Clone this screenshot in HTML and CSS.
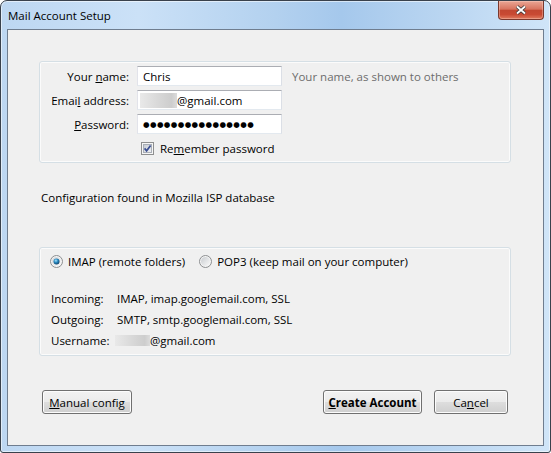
FILE: index.html
```html
<!DOCTYPE html>
<html lang="en">
<head>
<meta charset="utf-8">
<title>Mail Account Setup</title>
<link rel="stylesheet" href="styles.css">
</head>
<body>
<div class="window">
  <div class="titlebar">
    <span class="title">Mail Account Setup</span>
    <button class="close" aria-label="Close">
      <svg width="12" height="10" viewBox="0 0 12 10">
        <path d="M2 1.5 L10 8.5 M10 1.5 L2 8.5" stroke="#3a3a3a" stroke-width="3.6" fill="none"/>
        <path d="M2 1.5 L10 8.5 M10 1.5 L2 8.5" stroke="#ffffff" stroke-width="1.8" fill="none"/>
      </svg>
    </button>
  </div>
  <div class="client">
    <div class="group identity">
      <div class="grid">
        <label class="lbl">Your <u>n</u>ame:</label>
        <div class="field">Chris</div>
        <span class="hint">Your name, as shown to others</span>

        <label class="lbl">Emai<u>l</u> address:</label>
        <div class="field"><span class="redact mail"></span>@gmail.com</div>
        <span></span>

        <label class="lbl"><u>P</u>assword:</label>
        <div class="field"><span class="dots">●●●●●●●●●●●●●●●●</span></div>
        <span></span>

        <span></span>
        <div class="check">
          <svg width="13" height="13" viewBox="0 0 13 13">
            <defs>
              <linearGradient id="cb" x1="0" y1="0" x2="1" y2="1">
                <stop offset="0" stop-color="#c4c9d2"/>
                <stop offset="1" stop-color="#f2f3f5"/>
              </linearGradient>
            </defs>
            <rect x="0.5" y="0.5" width="12" height="12" fill="#f6f6f6" stroke="#8e8f8f"/>
            <rect x="2.5" y="2.5" width="8" height="8" fill="url(#cb)" stroke="#a9aeb6"/>
            <path d="M3.6 6.4 L5.6 8.8 L9.6 3.4" fill="none" stroke="#3b4f92" stroke-width="1.7"/>
          </svg>
          <span>Re<u>m</u>ember password</span>
        </div>
      </div>
    </div>

    <p class="status">Configuration found in Mozilla ISP database</p>

    <div class="group config">
      <div class="radios">
        <div class="radio">
          <svg width="13" height="13" viewBox="0 0 13 13">
            <defs>
              <linearGradient id="rb1" x1="0" y1="0" x2="1" y2="1">
                <stop offset="0" stop-color="#cfd2d6"/>
                <stop offset="1" stop-color="#fafafa"/>
              </linearGradient>
              <radialGradient id="rd" cx="0.4" cy="0.35" r="0.7">
                <stop offset="0" stop-color="#a9e4fb"/>
                <stop offset="0.45" stop-color="#2b8bc2"/>
                <stop offset="1" stop-color="#0d3c62"/>
              </radialGradient>
            </defs>
            <circle cx="6.5" cy="6.5" r="6" fill="#f4f4f4" stroke="#8c8e90"/>
            <circle cx="6.5" cy="6.5" r="4.5" fill="url(#rb1)"/>
            <circle cx="6.5" cy="6.5" r="3" fill="url(#rd)"/>
          </svg>
          <span>IMAP (remote folders)</span>
        </div>
        <div class="radio">
          <svg width="13" height="13" viewBox="0 0 13 13">
            <defs>
              <linearGradient id="rb2" x1="0" y1="0" x2="1" y2="1">
                <stop offset="0" stop-color="#c9ccd0"/>
                <stop offset="1" stop-color="#fafafa"/>
              </linearGradient>
            </defs>
            <circle cx="6.5" cy="6.5" r="6" fill="#f4f4f4" stroke="#8c8e90"/>
            <circle cx="6.5" cy="6.5" r="4.5" fill="url(#rb2)"/>
          </svg>
          <span>POP3 (keep mail on your computer)</span>
        </div>
      </div>
      <div class="details">
        <span>Incoming:</span><span>IMAP, imap.googlemail.com, SSL</span>
        <span>Outgoing:</span><span>SMTP, smtp.googlemail.com, SSL</span>
        <span>Username:</span><span><span class="redact user"></span>@gmail.com</span>
      </div>
    </div>

    <div class="buttons">
      <button class="btn manual"><u>M</u>anual config</button>
      <button class="btn create"><u>C</u>reate Account</button>
      <button class="btn cancel">Ca<u>n</u>cel</button>
    </div>
  </div>
</div>
</body>
</html>
```

FILE: styles.css
```css
body {
  margin: 0;
  background: #ffffff;
  font-family: "Open Sans", "Noto Sans", sans-serif;
  font-size: 11.5px;
  color: #000000;
}

.window {
  width: 551px;
  height: 453px;
  box-sizing: border-box;
  border: 1px solid #39414c;
  border-radius: 7px 7px 3px 3px;
  padding: 0 6px 6px;
  display: flex;
  flex-direction: column;
  background: linear-gradient(90deg, #bdd7f2 0%, #cbe1f7 25%, #b3d1ef 50%, #a5c8ec 62%, #b9d5f1 80%, #d0e5f8 100%);
  box-shadow: inset 0 0 0 1px rgba(255, 255, 255, 0.55);
}

.titlebar {
  height: 28px;
  display: flex;
  align-items: center;
}

.title {
  padding-left: 1px;
}

.close {
  margin-left: auto;
  align-self: flex-start;
  width: 46px;
  height: 19px;
  box-sizing: border-box;
  border: 1px solid #7a382d;
  border-top: none;
  border-radius: 0 0 4px 4px;
  padding: 0;
  display: flex;
  align-items: center;
  justify-content: center;
  background: linear-gradient(#eaa695 0%, #d8745f 45%, #c24731 52%, #c94a33 75%, #e07b5f 100%);
  box-shadow: inset 0 0 0 1px rgba(255, 220, 210, 0.35);
}

.client {
  flex: 1;
  background: #f0f0f0;
  border: 1px solid #6f7d8f;
  padding: 31px 32px 0 31px;
  display: flex;
  flex-direction: column;
}

.group {
  border: 1px solid #d5dfe5;
  border-radius: 3px;
  box-shadow: inset 0 0 0 1px #fbfbfb;
}

.identity {
  padding: 4px 8px;
}

.grid {
  display: grid;
  grid-template-columns: 81px 145px auto;
  column-gap: 8px;
  row-gap: 4px;
  align-items: center;
}

.lbl {
  text-align: right;
}

.field {
  height: 20px;
  box-sizing: border-box;
  border: 1px solid;
  border-color: #abadb3 #dbdfe6 #e3e9ef #e2e3ea;
  background: #ffffff;
  padding: 0 5px;
  display: flex;
  align-items: center;
  white-space: nowrap;
}

.hint {
  color: #6d6d6d;
  margin-left: 2px;
}

.redact {
  display: inline-block;
  background: linear-gradient(90deg, #e9e9e9 0%, #d8d8d8 50%, #cdcdcd 85%, #dcdcdc 100%);
}

.redact.mail {
  width: 37px;
  height: 15px;
  margin-left: -3px;
}

.redact.user {
  width: 35px;
  height: 11px;
  margin-left: -2px;
  vertical-align: -1px;
}

.dots {
  font-family: "DejaVu Sans", sans-serif;
  font-size: 7.5px;
  letter-spacing: 0.4px;
}

.check {
  grid-column: 2 / 4;
  height: 20px;
  display: flex;
  align-items: center;
  gap: 6px;
  padding-left: 4px;
}

.status {
  margin: 27px 0 0 2px;
  line-height: 16px;
}

.config {
  margin-top: 41px;
  padding: 5px 10px 4px;
}

.radios {
  display: flex;
  align-items: center;
  gap: 14px;
  height: 16px;
}

.radio {
  display: flex;
  align-items: center;
  gap: 5px;
}

.details {
  margin-top: 20px;
  display: grid;
  grid-template-columns: 66px auto;
  padding-left: 1px;
  line-height: 20px;
  row-gap: 1px;
}

.buttons {
  margin-top: 34px;
  display: flex;
  padding: 0 3px;
}

.btn {
  height: 24px;
  box-sizing: border-box;
  border: 1px solid #707070;
  border-radius: 3px;
  padding: 0;
  font: inherit;
  color: #000000;
  background: linear-gradient(#f2f2f2 0%, #ebebeb 48%, #dddddd 52%, #cfcfcf 100%);
  box-shadow: inset 0 0 0 1px #fcfcfc;
}

.manual {
  width: 90px;
}

.create {
  width: 99px;
  margin-left: auto;
  font-weight: 700;
}

.cancel {
  width: 74px;
  margin-left: 12px;
}
```
